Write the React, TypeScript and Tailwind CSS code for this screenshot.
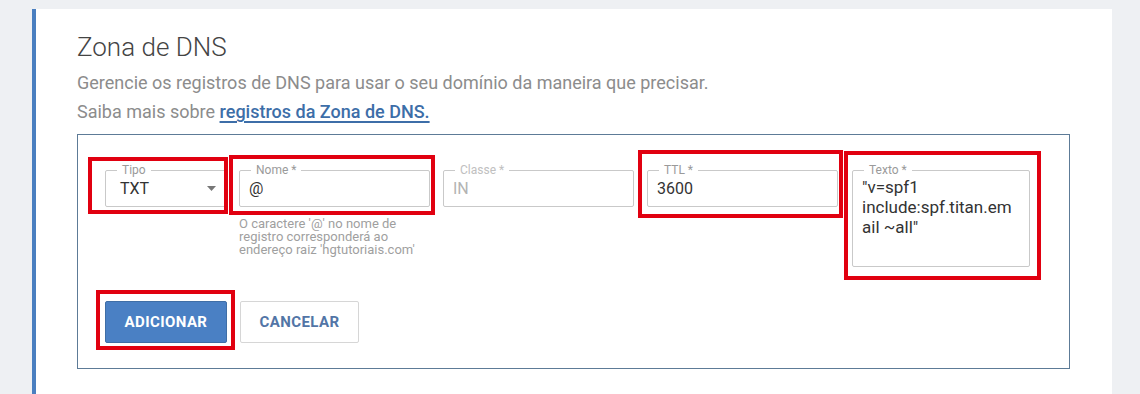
import React from "react";

const font = { fontFamily: "Roboto, 'Liberation Sans', sans-serif" };

function Red({ cls }: { cls: string }) {
  return <div className={`pointer-events-none absolute border-[4px] border-[#e10010] ${cls}`} />;
}

function Field({
  label,
  width,
  height = "h-[37px]",
  disabled = false,
  children,
  overlay,
}: {
  label: string;
  width: string;
  height?: string;
  disabled?: boolean;
  children: React.ReactNode;
  overlay?: React.ReactNode;
}) {
  return (
    <div className={`relative ${width} ${height} rounded-[2px] border border-[#c9c9c9] bg-white`}>
      <span
        className={`absolute left-[11px] top-[-8px] bg-white px-[5px] text-[12px] leading-[14px] ${
          disabled ? "text-[#c0c0c0]" : "text-[#9a9a9a]"
        }`}
      >
        {label}
      </span>
      {children}
      {overlay}
    </div>
  );
}

export default function App() {
  return (
    <div className="min-h-[394px] bg-[#eef0f3] pt-[9px]" style={font}>
      <div className="ml-[32px] h-[420px] w-[1080px] border-l-[4px] border-[#4a7fc0] bg-white pl-[41px] pt-[23px]">
        <h1 className="text-[26px] font-light leading-[31px] text-[#444]">Zona de DNS</h1>
        <p className="mt-[5px] text-[18px] leading-[29px] text-[#8c8c8c]">
          Gerencie os registros de DNS para usar o seu domínio da maneira que precisar.
        </p>
        <p className="text-[18px] leading-[29px] text-[#8c8c8c]">
          Saiba mais sobre{" "}
          <a className="font-medium text-[#3d6ea8] underline decoration-[1.5px] underline-offset-[3px]">
            registros da Zona de DNS.
          </a>
        </p>

        <div className="mt-[8px] h-[235px] w-[993px] border border-[#5d7b97] px-[27px] pt-[35px]">
          <div className="flex items-start gap-[13px]">
            <Field label="Tipo" width="w-[121px]" overlay={<Red cls="-left-[18px] -top-[14px] -right-[3px] -bottom-[8px]" />}>
              <div className="flex h-full items-center justify-between pl-[14px] pr-[9px]">
                <span className="text-[16px] text-[#333]">TXT</span>
                <svg width="9" height="5" viewBox="0 0 9 5">
                  <polygon points="0,0 9,0 4.5,5" fill="#777" />
                </svg>
              </div>
            </Field>

            <div className="w-[191px]">
              <Field label="Nome *" width="w-[191px]" overlay={<Red cls="-left-[11px] -top-[16px] -right-[6px] -bottom-[9px]" />}>
                <div className="flex h-full items-center pl-[9px] text-[16px] text-[#333]">@</div>
              </Field>
              <p className="mt-[10px] whitespace-nowrap text-[13px] leading-[13px] text-[#9f9f9f]">
                O caractere '@' no nome de
                <br />
                registro corresponderá ao
                <br />
                endereço raiz 'hgtutoriais.com'
              </p>
            </div>

            <Field label="Classe *" width="w-[191px]" disabled>
              <div className="flex h-full items-center pl-[9px] text-[16px] text-[#b3b3b3]">IN</div>
            </Field>

            <Field label="TTL *" width="w-[191px]" overlay={<Red cls="-left-[10px] -top-[21px] -right-[6px] -bottom-[12px]" />}>
              <div className="flex h-full items-center pl-[9px] text-[16px] text-[#333]">3600</div>
            </Field>

            <Field
              label="Texto *"
              width="w-[178px] ml-[1px]"
              height="h-[97px]"
              overlay={<Red cls="-left-[9px] -top-[20px] -right-[12px] -bottom-[14px]" />}
            >
              <div className="pl-[9px] pt-[6px] text-[17px] leading-[20px] text-[#333]">
                "v=spf1
                <br />
                include:spf.titan.em
                <br />
                ail ~all"
              </div>
            </Field>
          </div>

          <div className="mt-[34px] flex gap-[13px]">
            <div className="relative">
              <button className="h-[42px] w-[122px] rounded-[2px] border border-[#3f6ea6] bg-[#4a80c4] text-[15px] font-bold tracking-[0.4px] text-white">
                ADICIONAR
              </button>
              <Red cls="-left-[9px] -top-[11px] -right-[8px] -bottom-[7px]" />
            </div>
            <button className="h-[42px] w-[119px] rounded-[2px] border border-[#d6d6d6] bg-white text-[15px] font-bold tracking-[0.4px] text-[#5275a6]">
              CANCELAR
            </button>
          </div>
        </div>
      </div>
    </div>
  );
}
